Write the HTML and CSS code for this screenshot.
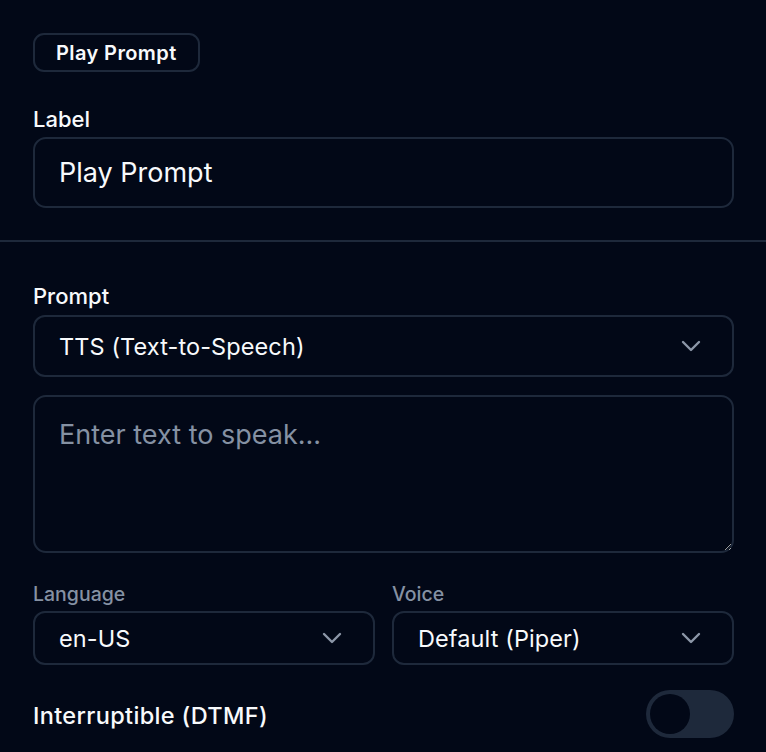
FILE: index.html
```html
<!DOCTYPE html>
<html lang="en">
<head>
    <meta charset="UTF-8">
    <meta name="viewport" content="width=device-width, initial-scale=1.0">
    <title>Play Prompt</title>
    <link rel="stylesheet" href="styles.css">
</head>
<body>
    <div class="panel">
        <div class="section">
            <span class="badge">Play Prompt</span>
            <label class="field-label first" for="label">Label</label>
            <input class="input" type="text" id="label" value="Play Prompt">
        </div>
        <hr class="divider">
        <div class="section">
            <label class="field-label" for="prompt">Prompt</label>
            <div class="select tall">
                <span>TTS (Text-to-Speech)</span>
                <svg class="chevron" viewBox="0 0 20 12"><path d="M2 2l8 8 8-8"/></svg>
            </div>
            <textarea class="textarea" placeholder="Enter text to speak..."></textarea>
            <div class="row">
                <div class="col">
                    <label class="small-label">Language</label>
                    <div class="select">
                        <span>en-US</span>
                        <svg class="chevron" viewBox="0 0 20 12"><path d="M2 2l8 8 8-8"/></svg>
                    </div>
                </div>
                <div class="col">
                    <label class="small-label">Voice</label>
                    <div class="select">
                        <span>Default (Piper)</span>
                        <svg class="chevron" viewBox="0 0 20 12"><path d="M2 2l8 8 8-8"/></svg>
                    </div>
                </div>
            </div>
            <div class="toggle-row">
                <span class="toggle-label">Interruptible (DTMF)</span>
                <div class="toggle"><div class="knob"></div></div>
            </div>
        </div>
    </div>
</body>
</html>
```

FILE: styles.css
```css
* {
    box-sizing: border-box;
}
body {
    margin: 0;
    background-color: #020817;
    color: #f8fafc;
    font-family: Inter, "Noto Sans", sans-serif;
    height: 752px;
    overflow: hidden;
}
.section {
    padding: 0 32px 0 33px;
}
.panel {
    padding-top: 33px;
}
.badge {
    display: inline-flex;
    align-items: center;
    height: 39px;
    padding: 0 21px;
    border: 2px solid #1e293b;
    border-radius: 11px;
    font-size: 20px;
    font-weight: 600;
    letter-spacing: 0.4px;
}
.field-label {
    display: block;
    font-size: 22px;
    line-height: 28px;
    font-weight: 500;
    margin-bottom: 5px;
}
.field-label.first {
    margin-top: 33px;
    margin-bottom: 4px;
}
.input {
    display: block;
    width: 100%;
    height: 71px;
    padding: 0 24px;
    background: transparent;
    border: 2px solid #1e293b;
    border-radius: 13px;
    color: #f8fafc;
    font-family: inherit;
    font-size: 27px;
    outline: none;
}
.divider {
    border: none;
    height: 2px;
    background-color: #1e293b;
    margin: 32px 0 40px;
}
.select {
    display: flex;
    align-items: center;
    justify-content: space-between;
    height: 54px;
    padding: 0 31px 0 24px;
    border: 2px solid #1e293b;
    border-radius: 12px;
    font-size: 23.5px;
    letter-spacing: 0.1px;
}
.select.tall {
    height: 62px;
}
.chevron {
    width: 20px;
    height: 12px;
    fill: none;
    stroke: #8c97a8;
    stroke-width: 2.4;
    stroke-linecap: round;
    stroke-linejoin: round;
}
.textarea {
    display: block;
    width: 100%;
    height: 158px;
    margin-top: 18px;
    padding: 20px 24px;
    background: transparent;
    border: 2px solid #1e293b;
    border-radius: 13px;
    color: #f8fafc;
    font-family: inherit;
    font-size: 27px;
    line-height: 36px;
    outline: none;
}
.textarea::placeholder {
    color: #8591a3;
}
.row {
    display: grid;
    grid-template-columns: 1fr 1fr;
    gap: 17px;
    margin-top: 29px;
}
.small-label {
    display: block;
    font-size: 19.5px;
    line-height: 24px;
    font-weight: 500;
    color: #8591a3;
    margin-bottom: 5px;
}
.toggle-row {
    display: flex;
    align-items: center;
    justify-content: space-between;
    margin-top: 25px;
    height: 48px;
}
.toggle-label {
    font-size: 23.5px;
    font-weight: 500;
    letter-spacing: 0.35px;
    padding-top: 3px;
}
.toggle {
    width: 88px;
    height: 48px;
    border-radius: 24px;
    background-color: #1e293b;
    padding: 4px;
}
.knob {
    width: 40px;
    height: 40px;
    border-radius: 50%;
    background-color: #020817;
}
```
